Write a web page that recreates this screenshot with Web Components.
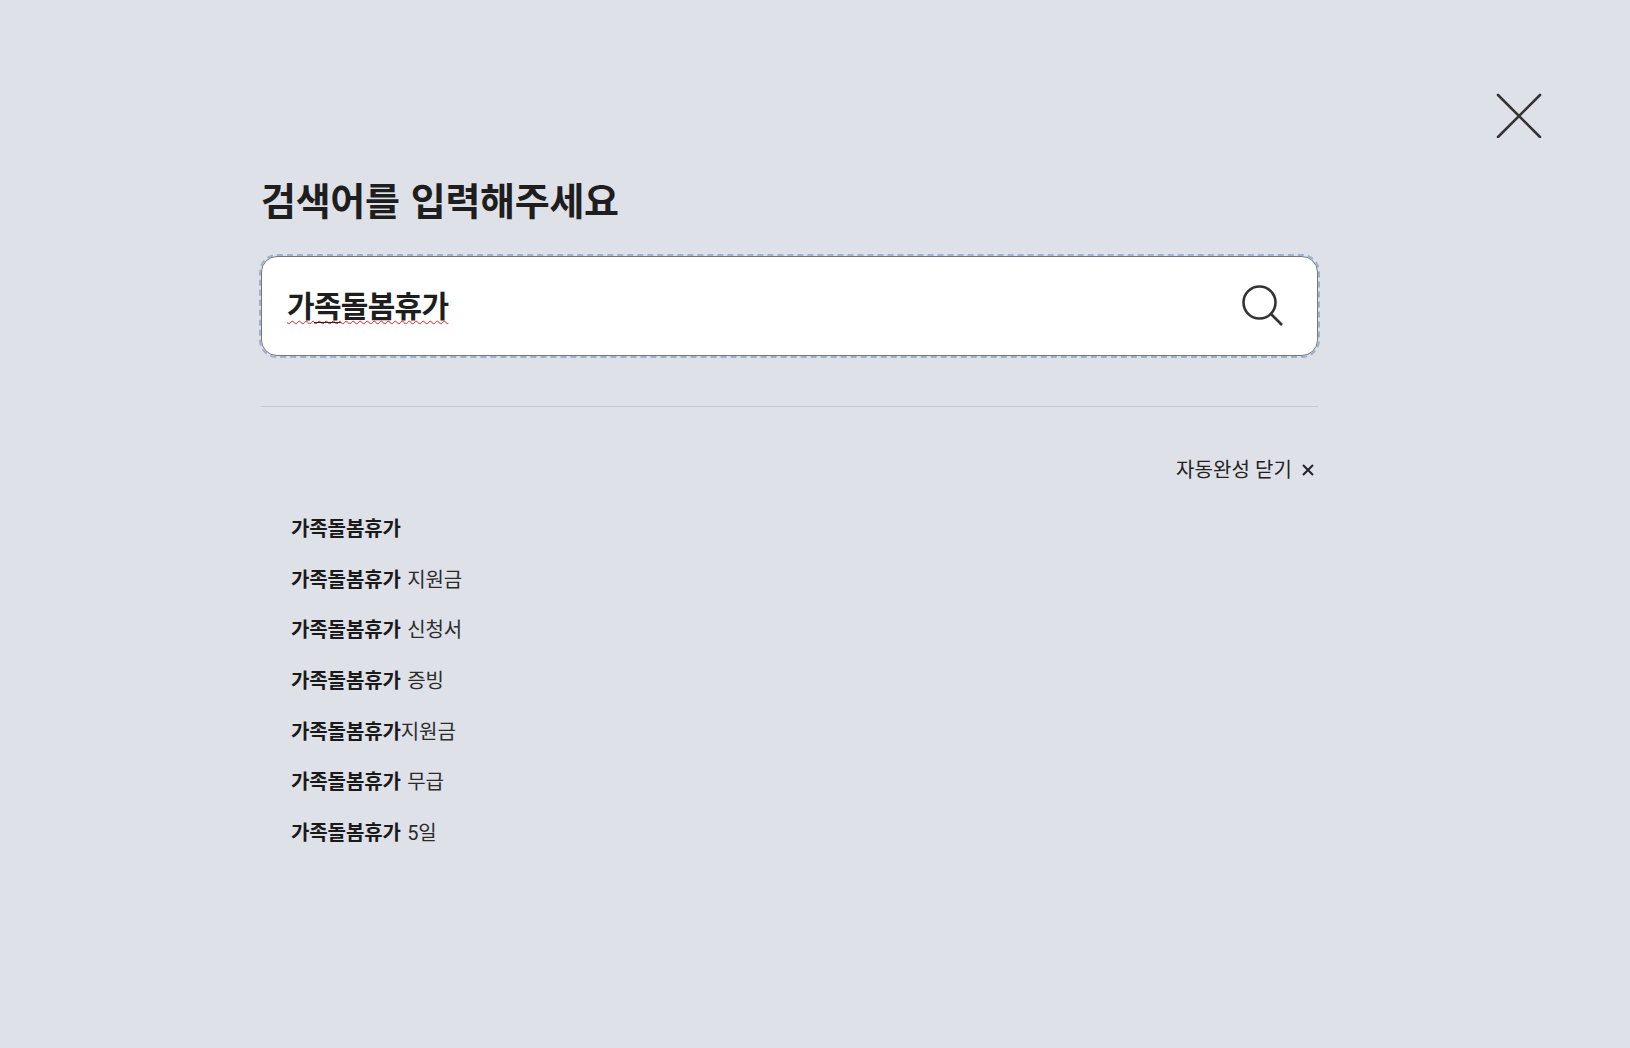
<!DOCTYPE html>
<html lang="ko"><head><meta charset="utf-8"><title>검색</title>
<style>
html,body{margin:0;height:100%}
body{background:#dee1e8;font-family:Roboto,"Noto Sans CJK KR",sans-serif;color:#1e1e1e}
</style></head><body>
<search-overlay>
  <search-box value="가족돌봄휴가"></search-box>
  <suggest-list>
    <suggest-item strong="가족돌봄휴가"></suggest-item>
    <suggest-item strong="가족돌봄휴가" rest=" 지원금"></suggest-item>
    <suggest-item strong="가족돌봄휴가" rest=" 신청서"></suggest-item>
    <suggest-item strong="가족돌봄휴가" rest=" 증빙"></suggest-item>
    <suggest-item strong="가족돌봄휴가" rest="지원금"></suggest-item>
    <suggest-item strong="가족돌봄휴가" rest=" 무급"></suggest-item>
    <suggest-item strong="가족돌봄휴가" rest=" 5일"></suggest-item>
  </suggest-list>
</search-overlay>
<script>
class SearchOverlay extends HTMLElement{constructor(){super();this.attachShadow({mode:'open'}).innerHTML=`<style>
:host{display:block;position:relative;min-height:1048px;box-sizing:border-box;padding:176px 312px 0 261px}
h1{margin:0 0 28px;font-size:38px;line-height:52px;font-weight:700;letter-spacing:-.3px;word-spacing:2px}
.close{position:absolute;top:90px;right:87px;width:48px;height:48px;padding:0;border:0;background:none;display:block}
svg{display:block}
</style>
<button class="close" aria-label="닫기"><svg width="48" height="48" viewBox="0 0 48 48" fill="none" stroke="#333" stroke-width="2.6" stroke-linecap="round"><path d="M3 5 45 47M45 5 3 47"/></svg></button>
<h1>검색어를 입력해주세요</h1>
<slot></slot>`;}}
class SearchBox extends HTMLElement{constructor(){super();this.attachShadow({mode:'open'}).innerHTML=`<style>
:host{display:flex;align-items:center;justify-content:space-between;box-sizing:border-box;height:100px;background:#fff;border:1px solid #767676;border-radius:16px;outline:2px dashed #9ab3d0;outline-offset:0;padding:0 33px 0 25px;margin-bottom:50px}
.t{font-size:30px;font-weight:700;letter-spacing:-.7px;line-height:44px;padding-top:1px;text-decoration:underline wavy #f01818 1px;text-underline-offset:3px;position:relative}
.u{text-decoration:underline #222 1px;text-underline-offset:5px}
svg{display:block}
</style><span class="t"></span>
<svg width="42" height="42" viewBox="0 0 42 42" fill="none" stroke="#333" stroke-width="2.6"><circle cx="17.5" cy="17.5" r="16"/><path d="M29 29 40 40"/></svg>`;
const v=this.getAttribute('value');const t=this.shadowRoot.querySelector('.t');t.innerHTML=v[0]+'<span class="u">'+v[1]+'</span>'+v.slice(2);}}
class SuggestList extends HTMLElement{constructor(){super();this.attachShadow({mode:'open'}).innerHTML=`<style>
:host{display:block;border-top:1px solid #c8cac9;padding-top:50px}
.head{display:flex;justify-content:flex-end;align-items:center;gap:10px;font-size:20px;line-height:26px;padding-right:4px;margin-bottom:31px;color:#222;letter-spacing:.1px}
.list{display:flex;flex-direction:column;gap:20.67px}
</style><div class="head"><span>자동완성 닫기</span><svg width="12" height="12" viewBox="0 0 12 12" stroke="#222" stroke-width="2" fill="none"><path d="M1 1 11 11M11 1 1 11"/></svg></div>
<div class="list"><slot></slot></div>`;}}
class SuggestItem extends HTMLElement{constructor(){super();this.attachShadow({mode:'open'}).innerHTML=`<style>
:host{display:block;padding-left:30px;font-size:20px;line-height:30px;color:#2b2b2b;white-space:pre;letter-spacing:-.1px;word-spacing:1.5px}
b{font-weight:700;color:#1a1a1a}
</style><b></b><span></span>`;
this.shadowRoot.querySelector('b').textContent=this.getAttribute('strong');
this.shadowRoot.querySelector('span').textContent=this.getAttribute('rest')||'';}}
customElements.define('search-overlay',SearchOverlay);
customElements.define('search-box',SearchBox);
customElements.define('suggest-list',SuggestList);
customElements.define('suggest-item',SuggestItem);
</script></body></html>
